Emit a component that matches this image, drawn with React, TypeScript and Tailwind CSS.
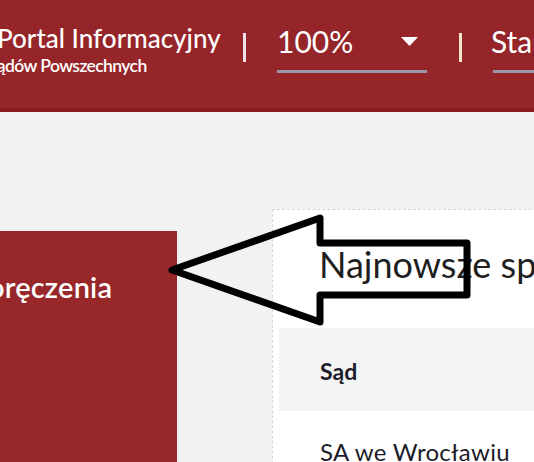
export default function App() {
  return (
    <div className="relative h-[462px] w-[534px] overflow-hidden bg-[#f2f2f2] font-['Lato','Open_Sans',sans-serif]">
      {/* top bar */}
      <header className="flex h-[112px] items-start border-b-4 border-[#8a1c21] bg-[#962529] text-white">
        <div className="-ml-[3px] mt-[20px] flex w-[227px] shrink-0 flex-col">
          <span className="text-[26px] font-medium leading-[36px] whitespace-nowrap">Portal Informacyjny</span>
          <span className="-ml-[9px] text-[17.5px] font-semibold leading-[20px] whitespace-nowrap tracking-[-0.6px]">Sądów Powszechnych</span>
        </div>
        <span className="ml-[19px] mt-[33px] h-[29px] w-[3px] shrink-0 bg-[#ece2ea]" />
        <div className="ml-[31px] mt-[22px] flex w-[150px] shrink-0 flex-col">
          <div className="flex items-center justify-between">
            <span className="text-[30px] leading-[38px]">100%</span>
            <svg width="17" height="9" viewBox="0 0 17 9" className="mr-[9px] shrink-0">
              <path d="M0 0H17L8.5 9Z" fill="#fff" />
            </svg>
          </div>
          <span className="mt-[10px] h-[3px] w-full bg-[#9b98a8]" />
        </div>
        <span className="ml-[32px] mt-[33px] h-[29px] w-[3px] shrink-0 bg-[#f3e6c4]" />
        <div className="ml-[29px] mt-[22px] flex shrink-0 flex-col">
          <span className="text-[30px] leading-[38px] whitespace-nowrap">Start</span>
          <span className="mt-[10px] ml-[2px] h-[3px] w-[60px] bg-[#9b98a8]" />
        </div>
      </header>

      {/* body */}
      <div className="flex items-start">
        <aside className="mt-[119px] h-[300px] w-[177px] shrink-0 bg-[#972729] pt-[39px]">
          <span className="-ml-[12px] block text-[29px] font-semibold leading-[34px] text-white whitespace-nowrap tracking-[0.2px]">
            oręczenia
          </span>
        </aside>
        <section className="ml-[95px] mt-[97px] h-[300px] w-[300px] shrink-0 border border-dashed border-[#d6d6d6] bg-white px-[6px] pt-[32px]">
          <h2 className="pl-[40px] text-[36px] font-normal leading-[44px] text-[#1f1f1f] whitespace-nowrap">
            Najnowsze sprawy
          </h2>
          <div className="mt-[42px] flex h-[83px] items-center bg-[#f4f4f4] pl-[41px] pt-[4px]">
            <span className="text-[23px] font-bold text-[#1c1c2a]">Sąd</span>
          </div>
          <div className="pl-[41px] pt-[23px]">
            <span className="text-[24px] text-[#1c1c2a] whitespace-nowrap tracking-[0.3px]">SA we Wrocławiu</span>
          </div>
        </section>
      </div>

      {/* annotation arrow */}
      <svg className="absolute left-0 top-0" width="534" height="462" viewBox="0 0 534 462">
        <path
          d="M172 270L320 218V243H467V295H320V322Z"
          fill="none"
          stroke="#000"
          strokeWidth="7"
          strokeLinejoin="round"
        />
      </svg>
    </div>
  );
}
